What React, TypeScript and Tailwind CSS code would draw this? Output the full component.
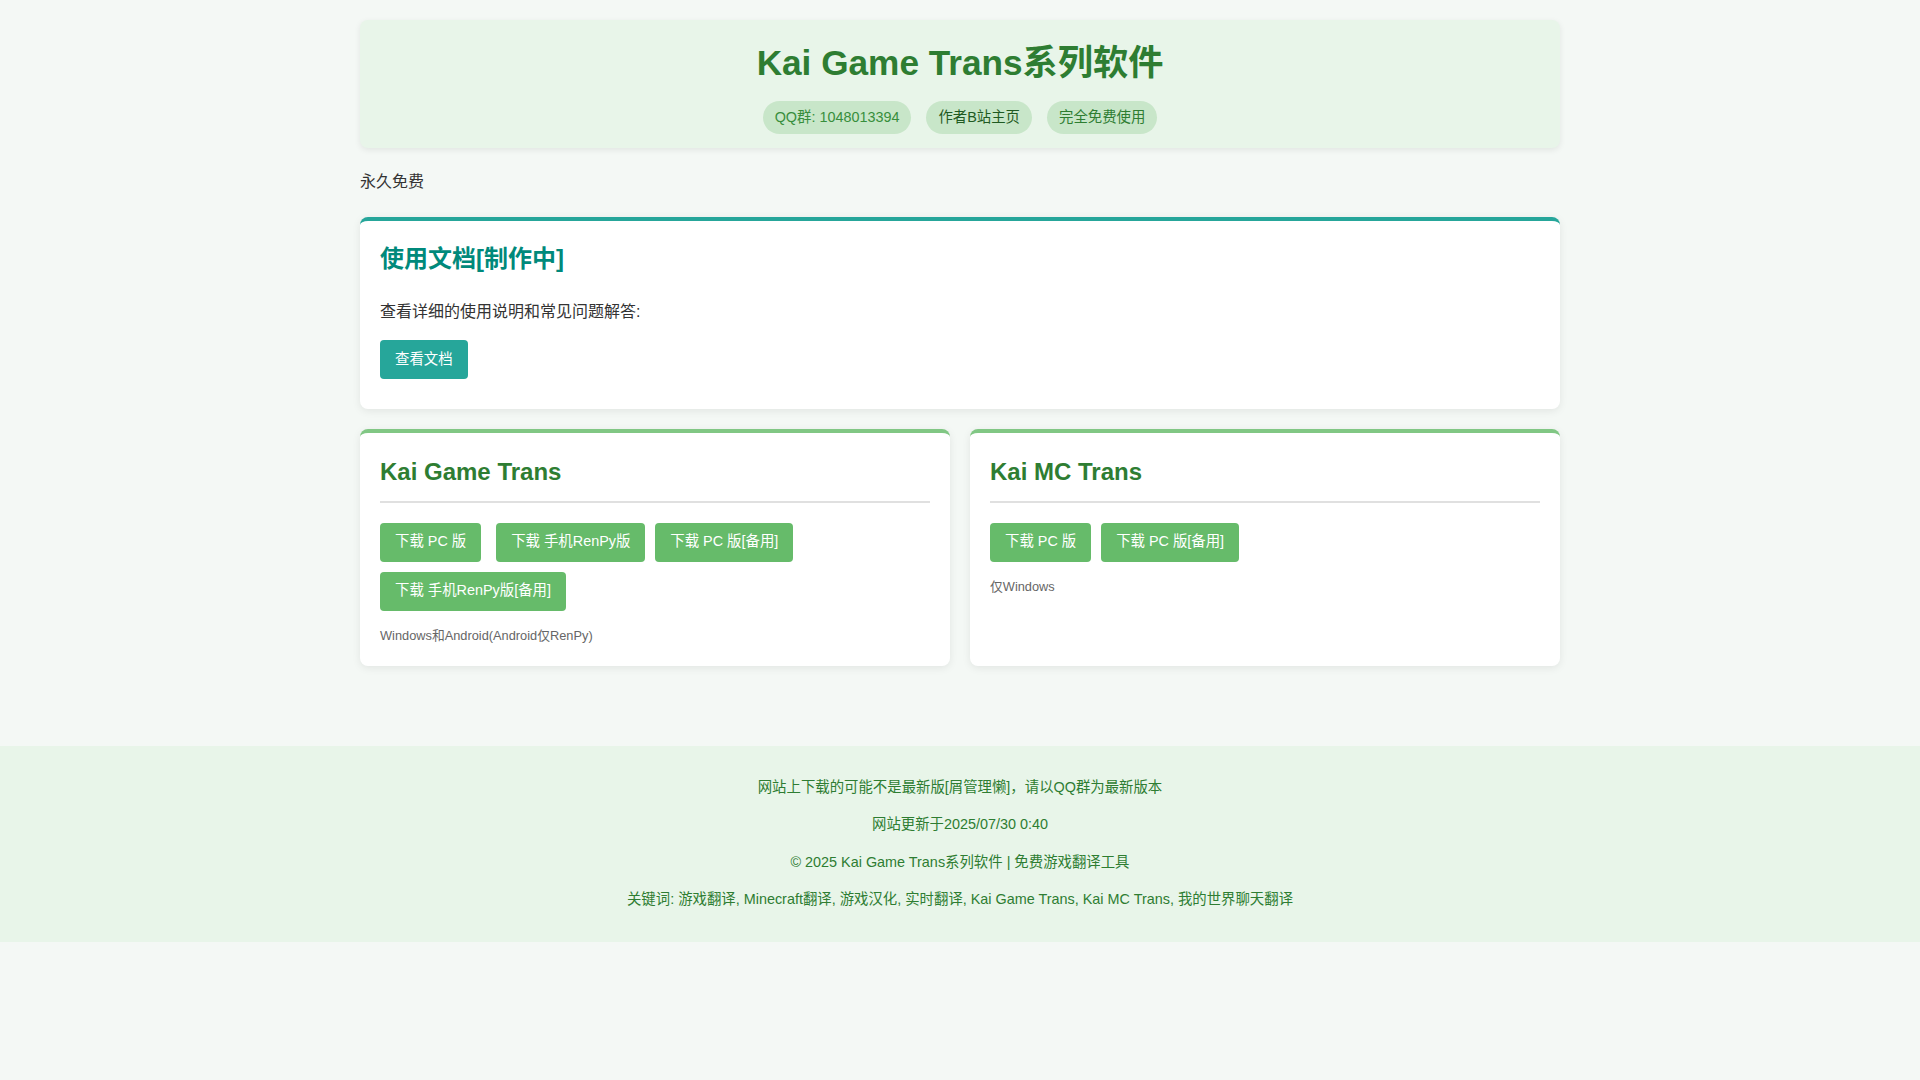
const FONT = "font-['Liberation_Sans','Noto_Sans_CJK_SC',sans-serif]";

type Product = {
  name: string;
  buttons: string[];
  note: string;
  wideFirstGap?: boolean;
};

const PRODUCTS: Product[] = [
  {
    name: "Kai Game Trans",
    buttons: ["下载 PC 版", "下载 手机RenPy版", "下载 PC 版[备用]", "下载 手机RenPy版[备用]"],
    note: "Windows和Android(Android仅RenPy)",
    wideFirstGap: true,
  },
  {
    name: "Kai MC Trans",
    buttons: ["下载 PC 版", "下载 PC 版[备用]"],
    note: "仅Windows",
  },
];

export default function App() {
  return (
    <div className={`min-h-screen bg-[#f4f8f5] text-[#333] ${FONT}`}>
      <div className="mx-auto max-w-[1200px] pt-5">
        <Header />
        <p className="mt-[21px] text-[16px] leading-[25.6px] text-[#333]">永久免费</p>
        <DocCard />
        <div className="mt-5 grid grid-cols-2 gap-5">
          {PRODUCTS.map((product) => (
            <ProductCard key={product.name} product={product} />
          ))}
        </div>
      </div>
      <Footer />
    </div>
  );
}

function Header() {
  return (
    <header className="rounded-lg bg-[#e8f5e9] pb-[14px] pt-[22px] text-center shadow-[0_2px_6px_rgba(0,0,0,0.08)]">
      <h1 className="text-[35.2px] font-bold leading-[42px] text-[#2e7d32]">Kai Game Trans系列软件</h1>
      <div className="mt-[17px] flex justify-center gap-[15px] text-[14.4px] leading-[23px]">
        <span className="rounded-full bg-[#c8e6c9] px-3 py-[5px] text-[#388e3c]">QQ群: 1048013394</span>
        <span className="rounded-full bg-[#c8e6c9] px-3 py-[5px] text-[#1f5a22]">作者B站主页</span>
        <span className="rounded-full bg-[#c8e6c9] px-3 py-[5px] text-[#2e7d32]">完全免费使用</span>
      </div>
    </header>
  );
}

function DocCard() {
  return (
    <section className="mt-[22px] rounded-lg border-t-4 border-[#26a69a] bg-white px-5 pb-[30px] pt-[24px] shadow-[0_2px_8px_rgba(0,0,0,0.08)]">
      <h2 className="text-[24px] font-bold leading-[28.8px] text-[#00897b]">使用文档[制作中]</h2>
      <p className="mt-[26px] text-[16px] leading-[25.6px] text-[#333]">查看详细的使用说明和常见问题解答:</p>
      <button className="mt-[15px] h-[39px] rounded bg-[#26a69a] px-[15px] text-[14.4px] text-white">查看文档</button>
    </section>
  );
}

function ProductCard({ product }: { product: Product }) {
  return (
    <section className="rounded-lg border-t-4 border-[#81c784] bg-white px-5 pb-5 pt-[25px] shadow-[0_2px_8px_rgba(0,0,0,0.08)]">
      <h2 className="border-b-2 border-[#e0e0e0] pb-[14px] text-[24px] font-bold leading-[28.8px] text-[#2e7d32]">
        {product.name}
      </h2>
      <div className="mt-5 flex flex-wrap gap-y-[10px]">
        {product.buttons.map((label, index) => (
          <button
            key={label}
            className={`h-[39px] rounded bg-[#66bb6a] px-[15px] text-[14.4px] text-white ${
              index === 0 && product.wideFirstGap ? "mr-[15px]" : "mr-[10px]"
            }`}
          >
            {label}
          </button>
        ))}
      </div>
      <p className="mt-[15px] text-[12.8px] leading-[20.5px] text-[#666]">{product.note}</p>
    </section>
  );
}

function Footer() {
  return (
    <footer className="mt-20 flex flex-col gap-[14.4px] bg-[#e8f5e9] pb-[31px] pt-[29.5px] text-center text-[14.4px] leading-[23.04px] text-[#2e7d32]">
      <p>网站上下载的可能不是最新版[屑管理懒]，请以QQ群为最新版本</p>
      <p>网站更新于2025/07/30 0:40</p>
      <p>© 2025 Kai Game Trans系列软件 | 免费游戏翻译工具</p>
      <p>关键词: 游戏翻译, Minecraft翻译, 游戏汉化, 实时翻译, Kai Game Trans, Kai MC Trans, 我的世界聊天翻译</p>
    </footer>
  );
}
